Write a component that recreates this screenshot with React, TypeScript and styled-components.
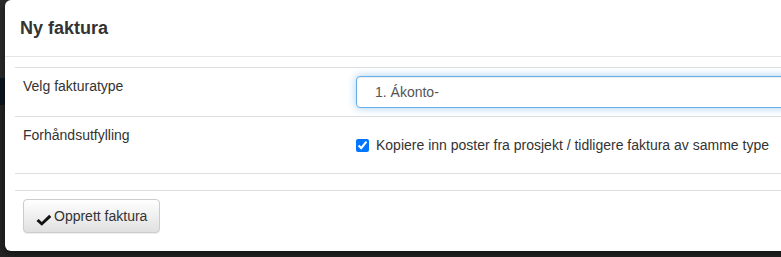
import { FC } from "react";
import styled, { createGlobalStyle } from "styled-components";

const GlobalStyle = createGlobalStyle`
  html, body {
    margin: 0;
    padding: 0;
  }

  body {
    font-family: "Liberation Sans", Arial, sans-serif;
    font-size: 14px;
    line-height: 20px;
    color: #333;
    background: #242424;
  }
`;

const Backdrop = styled.div`
  height: 257px;
  overflow: hidden;
  padding-left: 5px;
  background: linear-gradient(
    to bottom,
    #2b2b2b 0 78px,
    #0c1620 78px 105px,
    #242424 105px
  );
`;

const Modal = styled.div`
  width: 900px;
  background: #fff;
  border-radius: 6px 0 0 6px;
  box-shadow: 0 3px 9px rgba(0, 0, 0, 0.5);
`;

const Header = styled.div`
  padding: 15px;
  border-bottom: 1px solid #e5e5e5;
`;

const Title = styled.h4`
  margin: 0;
  font-size: 18px;
  font-weight: bold;
  line-height: 26px;
  color: #333;
`;

const Body = styled.div`
  padding: 10px;
`;

const Table = styled.div`
  border-top: 1px solid #ddd;
  margin-bottom: 16px;
`;

const Row = styled.div`
  display: grid;
  grid-template-columns: 333px 1fr;
  border-bottom: 1px solid #ddd;
`;

const Cell = styled.div`
  padding: 8px;
  min-width: 0;
`;

const Select = styled.div`
  box-sizing: border-box;
  height: 32px;
  padding: 5px 18px;
  border: 1px solid #66afe9;
  border-radius: 4px;
  color: #555;
  background: #fff;
  box-shadow: inset 0 1px 1px rgba(0, 0, 0, 0.075),
    0 0 8px rgba(102, 175, 233, 0.6);
`;

const CheckLabel = styled.label`
  display: flex;
  align-items: center;
  margin: 10px 0;
  gap: 7px;

  input {
    margin: 0;
    width: 13px;
    height: 13px;
    accent-color: #0075ff;
  }
`;

const Footer = styled.div`
  border-top: 1px solid #ddd;
  padding: 8px;
`;

const Button = styled.button`
  display: inline-flex;
  align-items: center;
  gap: 2px;
  height: 34px;
  padding: 6px 12px;
  font-family: inherit;
  font-size: 14px;
  color: #333;
  border: 1px solid #ccc;
  border-radius: 4px;
  background: linear-gradient(to bottom, #fff 0%, #e0e0e0 100%);
  box-shadow: inset 0 1px 0 rgba(255, 255, 255, 0.15),
    0 1px 1px rgba(0, 0, 0, 0.075);

  svg {
    margin-top: 8px;
  }
`;

const CheckIcon: FC = () => (
  <svg width="16" height="12" viewBox="0 0 16 12">
    <path d="M0.5 7 L2.6 5 L5.8 8 L13.2 0.8 L15.3 2.9 L5.8 11.8 Z" fill="#111" />
  </svg>
);

const App: FC = () => {
  return (
    <>
      <GlobalStyle />
      <Backdrop>
        <Modal>
          <Header>
            <Title>Ny faktura</Title>
          </Header>
          <Body>
            <Table>
              <Row>
                <Cell>Velg fakturatype</Cell>
                <Cell>
                  <Select>1. Ákonto-</Select>
                </Cell>
              </Row>
              <Row>
                <Cell>Forhåndsutfylling</Cell>
                <Cell>
                  <CheckLabel>
                    <input type="checkbox" defaultChecked />
                    Kopiere inn poster fra prosjekt / tidligere faktura av samme type
                  </CheckLabel>
                </Cell>
              </Row>
            </Table>
            <Footer>
              <Button type="button">
                <CheckIcon />
                Opprett faktura
              </Button>
            </Footer>
          </Body>
        </Modal>
      </Backdrop>
    </>
  );
};

export default App;
